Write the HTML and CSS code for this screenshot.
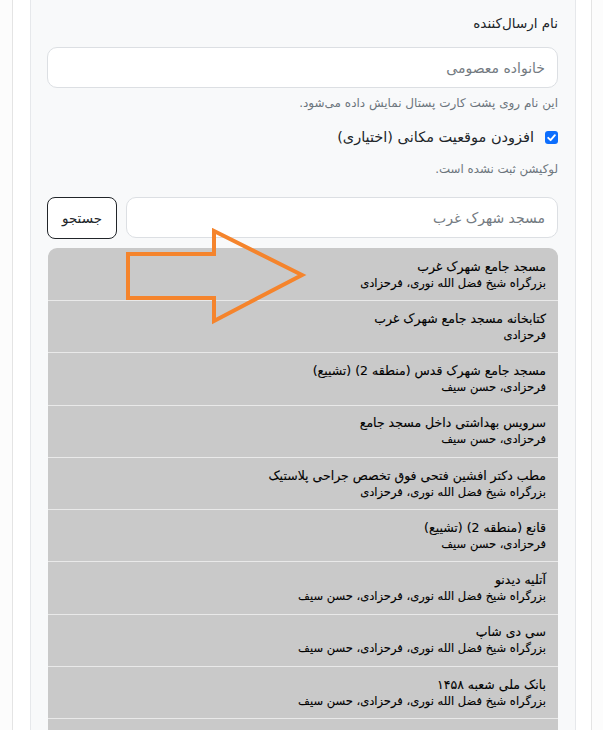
FILE: index.html
```html
<!DOCTYPE html>
<html lang="fa" dir="rtl">
<head>
<meta charset="utf-8">
<title>فرم</title>
<link rel="stylesheet" href="styles.css">
</head>
<body>
<div class="outer">
  <div class="panel">
    <label class="field-label">نام ارسال‌کننده</label>
    <input class="text-input" type="text" placeholder="خانواده معصومی">
    <div class="help">این نام روی پشت کارت پستال نمایش داده می‌شود.</div>

    <label class="check-row">
      <span class="checkbox"><svg viewBox="0 0 13 13" width="13" height="13"><path d="M3.2 6.8 L5.6 9.2 L9.9 4.2" fill="none" stroke="#fff" stroke-width="1.9" stroke-linecap="round" stroke-linejoin="round"/></svg></span>
      <span class="check-text">افزودن موقعیت مکانی (اختیاری)</span>
    </label>
    <div class="help loc">لوکیشن ثبت نشده است.</div>

    <div class="search-row">
      <input class="text-input search-input" type="text" placeholder="مسجد شهرک غرب">
      <button class="search-btn" type="button">جستجو</button>
    </div>

    <div class="results">
      <svg class="arrow" width="184" height="100" viewBox="0 0 184 100"><polygon points="2,26 88,26 88,3 176,47 88,93 88,70 2,70" fill="none" stroke="#f5842c" stroke-width="4" stroke-linejoin="miter"/></svg>
      <div class="item"><div class="title">مسجد جامع شهرک غرب</div><div class="sub">بزرگراه شیخ فضل الله نوری، فرحزادی</div></div>
      <div class="item"><div class="title">کتابخانه مسجد جامع شهرک غرب</div><div class="sub">فرحزادی</div></div>
      <div class="item"><div class="title">مسجد جامع شهرک قدس (منطقه 2) (تشییع)</div><div class="sub">فرحزادی، حسن سیف</div></div>
      <div class="item"><div class="title">سرویس بهداشتی داخل مسجد جامع</div><div class="sub">فرحزادی، حسن سیف</div></div>
      <div class="item"><div class="title">مطب دکتر افشین فتحی فوق تخصص جراحی پلاستیک</div><div class="sub">بزرگراه شیخ فضل الله نوری، فرحزادی</div></div>
      <div class="item"><div class="title">قانع (منطقه 2) (تشییع)</div><div class="sub">فرحزادی، حسن سیف</div></div>
      <div class="item"><div class="title">آتلیه دیدنو</div><div class="sub">بزرگراه شیخ فضل الله نوری، فرحزادی، حسن سیف</div></div>
      <div class="item"><div class="title">سی دی شاپ</div><div class="sub">بزرگراه شیخ فضل الله نوری، فرحزادی، حسن سیف</div></div>
      <div class="item"><div class="title">بانک ملی شعبه ۱۴۵۸</div><div class="sub">بزرگراه شیخ فضل الله نوری، فرحزادی، حسن سیف</div></div>
      <div class="item item-empty"></div>
    </div>
  </div>
</div>
</body>
</html>
```

FILE: styles.css
```css
html, body {
  margin: 0;
  padding: 0;
}
body {
  background: #fcfcfc;
  font-family: "DejaVu Sans", "Noto Sans", sans-serif;
  color: #212529;
  height: 730px;
  overflow: hidden;
}
.outer {
  margin: 0 11px 0 12px;
  background: #fff;
  border-left: 1px solid #e4e4e4;
  border-right: 1px solid #e4e4e4;
  padding: 0 15px 0 17px;
  height: 730px;
  overflow: hidden;
  box-sizing: border-box;
}
.panel {
  background: #f8f9fa;
  border-left: 1px solid #e6e8eb;
  border-right: 1px solid #e6e8eb;
  padding: 13px 17px 0 16px;
  height: 730px;
  overflow: hidden;
  box-sizing: border-box;
}
.field-label {
  display: block;
  font-size: 13.5px;
  line-height: 20px;
  color: #212529;
  margin-bottom: 14px;
}
.text-input {
  display: block;
  width: 100%;
  box-sizing: border-box;
  height: 41px;
  border: 1px solid #dcdfe3;
  border-radius: 10px;
  background: #fff;
  padding: 0 12px;
  font-family: "DejaVu Sans", sans-serif;
  font-size: 14px;
  color: #212529;
  outline: none;
}
.text-input::placeholder {
  color: #737a81;
}
.help {
  font-size: 12px;
  line-height: 18px;
  color: #6c757d;
  margin-top: 6px;
}
.check-row {
  display: flex;
  align-items: center;
  gap: 11px;
  margin-top: 15px;
  height: 20px;
}
.checkbox {
  width: 13px;
  height: 13px;
  border-radius: 3px;
  background: #0d6efd;
  display: flex;
  flex: none;
}
.check-text {
  font-size: 14.5px;
  line-height: 20px;
  color: #212529;
}
.help.loc {
  font-size: 11.8px;
  margin-top: 13px;
}
.search-row {
  display: flex;
  gap: 9px;
  margin-top: 19px;
}
.search-input {
  flex: 1;
  width: auto;
}
.search-btn {
  flex: none;
  width: 70px;
  height: 42px;
  border: 1px solid #212529;
  border-radius: 8px;
  background: #fff;
  font-family: "DejaVu Sans", sans-serif;
  font-size: 13.5px;
  color: #212529;
  padding: 0;
}
.results {
  position: relative;
  margin: 9px 0 0 1px;
  background: #c9c9c9;
  border-radius: 9px 9px 0 0;
}
.arrow {
  position: absolute;
  left: 78px;
  top: -20px;
}
.item {
  padding: 9.63px 12px;
  border-top: 1px solid #e9e9e9;
  color: #000;
  -webkit-text-stroke: 0.12px #000;
}
.arrow + .item {
  border-top: none;
  padding-top: 10.5px;
}
.item-empty {
  min-height: 32px;
}
.title {
  font-size: 12.5px;
  line-height: 16px;
}
.sub {
  font-size: 11.5px;
  line-height: 16px;
}
```
